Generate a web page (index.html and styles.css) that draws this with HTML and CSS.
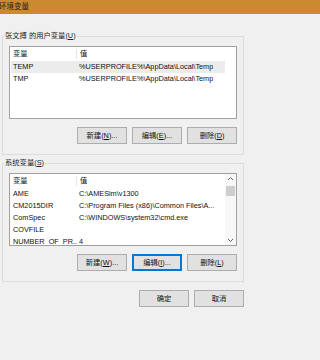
FILE: index.html
```html
<!DOCTYPE html>
<html lang="zh-CN">
<head>
    <meta charset="UTF-8">
    <meta name="viewport" content="width=device-width, initial-scale=1.0">
    <title>环境变量</title>
    <link rel="stylesheet" href="styles.css">
</head>
<body>
    <div class="titlebar">
        <span class="title">环境变量</span>
    </div>

    <div class="dialog">
        <fieldset class="group user-group">
            <legend>张文搏 的用户变量(<u>U</u>)</legend>
            <div class="listview">
                <div class="lv-body">
                    <div class="lv-header">
                        <div class="col-name">变量</div>
                        <div class="col-value">值</div>
                    </div>
                    <div class="lv-row selected">
                        <div class="col-name">TEMP</div>
                        <div class="col-value">%USERPROFILE%\AppData\Local\Temp</div>
                    </div>
                    <div class="lv-row">
                        <div class="col-name">TMP</div>
                        <div class="col-value">%USERPROFILE%\AppData\Local\Temp</div>
                    </div>
                </div>
            </div>
            <div class="button-row">
                <button class="btn">新建(<u>N</u>)...</button>
                <button class="btn">编辑(<u>E</u>)...</button>
                <button class="btn">删除(<u>D</u>)</button>
            </div>
        </fieldset>

        <fieldset class="group system-group">
            <legend>系统变量(<u>S</u>)</legend>
            <div class="listview">
                <div class="lv-body">
                    <div class="lv-header">
                        <div class="col-name">变量</div>
                        <div class="col-value">值</div>
                    </div>
                    <div class="lv-row">
                        <div class="col-name">AME</div>
                        <div class="col-value">C:\AMESim\v1300</div>
                    </div>
                    <div class="lv-row">
                        <div class="col-name">CM2015DIR</div>
                        <div class="col-value">C:\Program Files (x86)\Common Files\A...</div>
                    </div>
                    <div class="lv-row">
                        <div class="col-name">ComSpec</div>
                        <div class="col-value">C:\WINDOWS\system32\cmd.exe</div>
                    </div>
                    <div class="lv-row">
                        <div class="col-name">COVFILE</div>
                        <div class="col-value"></div>
                    </div>
                    <div class="lv-row">
                        <div class="col-name">NUMBER_OF_PR...</div>
                        <div class="col-value">4</div>
                    </div>
                </div>
                <div class="scrollbar">
                    <svg class="arrow" width="11" height="10" viewBox="0 0 11 10">
                        <path d="M3 6 L5.5 3.5 L8 6" fill="none" stroke="#606060" stroke-width="1"/>
                    </svg>
                    <div class="track">
                        <div class="thumb"></div>
                    </div>
                    <svg class="arrow" width="11" height="10" viewBox="0 0 11 10">
                        <path d="M3 4 L5.5 6.5 L8 4" fill="none" stroke="#606060" stroke-width="1"/>
                    </svg>
                </div>
            </div>
            <div class="button-row">
                <button class="btn">新建(<u>W</u>)...</button>
                <button class="btn focused">编辑(<u>I</u>)...</button>
                <button class="btn">删除(<u>L</u>)</button>
            </div>
        </fieldset>

        <div class="dialog-buttons">
            <button class="btn">确定</button>
            <button class="btn">取消</button>
        </div>
    </div>
</body>
</html>
```

FILE: styles.css
```css
/* Environment variables dialog */
:root {
    --face: #f0f0f0;
    --title: #cc8a30;
    --group-border: #dcdcdc;
    --list-border: #a0a0a0;
    --btn-face: #e1e1e1;
    --btn-border: #adadad;
    --focus: #0078d7;
    --text: #111111;
}

* {
    margin: 0;
    padding: 0;
    box-sizing: border-box;
}

body {
    background: var(--face);
    color: var(--text);
    font-family: 'Liberation Sans', 'Noto Sans CJK SC', sans-serif;
    font-size: 7.3px;
    line-height: 10px;
    width: 320px;
    height: 360px;
    overflow: hidden;
}

.titlebar {
    height: 14px;
    background: var(--title);
    display: flex;
    align-items: center;
    overflow: hidden;
}

.title {
    margin-left: -1px;
    color: #222;
    font-size: 7.5px;
}

.dialog {
    padding: 17px 0 0 2px;
}

/* group boxes */
.group {
    width: 242px;
    border: 1px solid var(--group-border);
    padding: 5px 6px 10px 6px;
    min-inline-size: 0;
}

.group legend {
    margin-left: -5px;
    padding: 0 1px;
    line-height: 10px;
    color: #222;
}

.system-group {
    margin-top: 3px;
}

/* list views */
.listview {
    width: 228px;
    height: 73px;
    background: white;
    border: 1px solid var(--list-border);
    display: flex;
    overflow: hidden;
}

.lv-body {
    flex: 1;
    overflow: hidden;
}

.lv-header {
    display: flex;
    height: 14px;
    align-items: center;
}

.lv-row {
    display: flex;
    height: 12px;
    align-items: center;
    width: 214px;
    margin-left: 1px;
}

.lv-row.selected {
    background: #ececec;
}

.col-name {
    width: 66px;
    padding-left: 2px;
    white-space: nowrap;
    overflow: hidden;
    flex-shrink: 0;
}

.lv-header .col-name {
    width: 67px;
    padding-left: 3px;
    border-right: 1px solid #e5e5e5;
}

.col-value {
    padding-left: 3px;
    white-space: nowrap;
    overflow: hidden;
}

.lv-row .col-value {
    padding-left: 2px;
}

/* scrollbar */
.scrollbar {
    width: 11px;
    display: flex;
    flex-direction: column;
    background: #f7f7f7;
}

.arrow {
    display: block;
    flex-shrink: 0;
}

.track {
    flex: 1;
    padding: 2px 1px 0 1px;
}

.thumb {
    height: 10px;
    background: #cdcdcd;
}

/* buttons */
.button-row {
    display: flex;
    justify-content: flex-end;
    gap: 5px;
    margin-top: 8px;
}

.btn {
    width: 50px;
    height: 17px;
    background: var(--btn-face);
    border: 1px solid var(--btn-border);
    font-family: inherit;
    font-size: 7.3px;
    line-height: 10px;
    color: var(--text);
}

.btn u {
    text-decoration-thickness: 1px;
}

.btn.focused {
    border-color: var(--focus);
    box-shadow: inset 0 0 0 1px var(--focus);
}

.dialog-buttons {
    width: 242px;
    display: flex;
    justify-content: flex-end;
    gap: 5px;
    margin-top: 8px;
}
```
